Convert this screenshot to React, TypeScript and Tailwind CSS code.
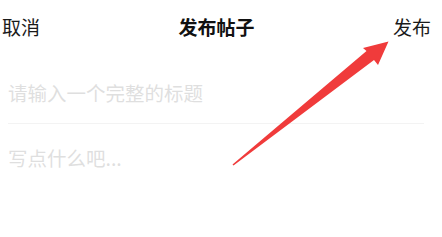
import { useState } from 'react';

// New post editor: header (cancel / title / publish), title input, body textarea.
// A red annotation arrow points at the publish button.

function AnnotationArrow() {
  return (
    <svg
      className="pointer-events-none absolute left-0 top-0"
      width={442}
      height={237}
      viewBox="0 0 442 237"
    >
      <polygon
        fill="#f03b3b"
        points="388.5,41.5 378,65 374,60 233.5,165.5 232.5,164.5 366.5,51 363,48"
      />
    </svg>
  );
}

export default function App() {
  const [title, setTitle] = useState('');
  const [body, setBody] = useState('');

  return (
    <div
      className="relative h-[237px] w-[442px] overflow-hidden bg-white text-[#111]"
      style={{ fontFamily: '"Noto Sans CJK SC", "Noto Sans", sans-serif' }}
    >
      <header className="flex h-[53px] items-center justify-between pl-[2px] pr-[11px] text-[19px] leading-[24px]">
        <button type="button" className="text-[#1a1a1a]">取消</button>
        <h1 className="font-bold text-[#111]">发布帖子</h1>
        <button type="button" className="text-[#1a1a1a]">发布</button>
      </header>

      <div className="ml-[8px] mr-[18px] border-b border-[#f3f3f3] pt-[20px] pb-[10px]">
        <input
          className="block h-[40px] w-full bg-transparent text-[19.5px] leading-[40px] outline-none placeholder:text-[#dfdfdf]"
          placeholder="请输入一个完整的标题"
          value={title}
          onChange={e => setTitle(e.target.value)}
        />
      </div>

      <textarea
        className="block h-[100px] w-full resize-none bg-transparent px-[8px] pt-[20px] text-[19.5px] leading-[28px] outline-none placeholder:text-[#dfdfdf]"
        placeholder="写点什么吧..."
        value={body}
        onChange={e => setBody(e.target.value)}
      />

      <AnnotationArrow />
    </div>
  );
}
